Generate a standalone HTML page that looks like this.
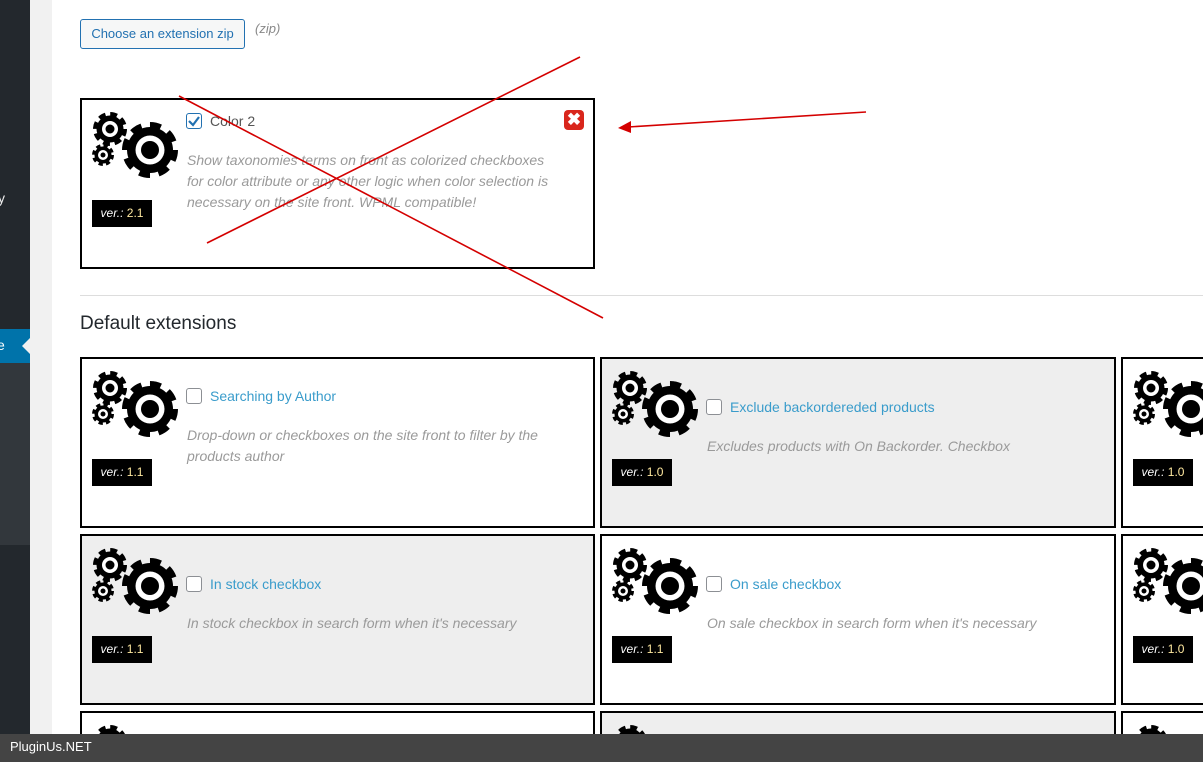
<!DOCTYPE html>
<html style="overflow:hidden;width:1203px;height:762px"><head><meta charset="utf-8"><style>
*{box-sizing:border-box;margin:0;padding:0}
body{width:1203px;height:762px;overflow:hidden;position:relative;background:#fff;font-family:"Liberation Sans",sans-serif}
.abs{position:absolute}
#wrap{position:absolute;left:0;top:0;width:1203px;height:762px;overflow:hidden}
.card{position:absolute;border:2px solid #000;background:#fff;width:516px;height:171px}
.card.g{background:#eee}
.card svg{position:absolute;left:10px;top:10px}
.t{position:absolute;left:104px;font-size:14px;color:#3a9ccb;white-space:nowrap;line-height:18px}
.t i{display:inline-block;width:16px;height:16px;border:1px solid #8c8f94;border-radius:3px;background:#fff;vertical-align:-3px;margin-right:8px}
.d{position:absolute;left:105px;width:400px;font-size:14px;font-style:italic;color:#9a9a9a;line-height:21px}
.v{position:absolute;left:10px;top:100px;width:60px;height:27px;background:#000;color:#fff;font-size:12px;line-height:27px;text-align:center}
.v em{font-style:italic}
.v b{font-weight:normal;color:#ffe9a0}
</style></head><body>
<div id="wrap">
<svg width="0" height="0" style="position:absolute;left:0;top:0">
<defs>
<g id="gear">
<circle cx="58" cy="40" r="23"/>
<circle cx="58" cy="40" r="25" fill="none" stroke="#000" stroke-width="6" stroke-dasharray="11 8.6"/>
<circle cx="58" cy="40" r="14.5" fill="#fff"/>
<circle cx="58" cy="40" r="9"/>
<circle cx="18" cy="19" r="13.5"/>
<circle cx="18" cy="19" r="15" fill="none" stroke="#000" stroke-width="4" stroke-dasharray="7 4.8"/>
<circle cx="18" cy="19" r="8" fill="#fff"/>
<circle cx="18" cy="19" r="4.5"/>
<circle cx="11" cy="45" r="8.5"/>
<circle cx="11" cy="45" r="9.5" fill="none" stroke="#000" stroke-width="3" stroke-dasharray="4.3 3.2"/>
<circle cx="11" cy="45" r="5" fill="#fff"/>
<circle cx="11" cy="45" r="2.5"/>
</g></defs></svg>
<div class="abs" style="left:0;top:0;width:30px;height:762px;background:#23282d"></div>
<div class="abs" style="left:0;top:363px;width:30px;height:182px;background:#32373c"></div>
<div class="abs" style="left:0;top:329px;width:30px;height:34px;background:#0073aa"></div>
<div class="abs" style="left:-3px;top:337px;color:#fff;font-size:14px">e</div>
<div class="abs" style="left:22px;top:338px;width:0;height:0;border-top:8px solid transparent;border-bottom:8px solid transparent;border-right:8px solid #f1f1f1"></div>
<div class="abs" style="left:-2px;top:190px;font-size:14px;color:#eee">y</div>
<div class="abs" style="left:30px;top:0;width:22px;height:762px;background:#f1f1f1"></div>

<div class="abs" style="left:80px;top:19px;width:165px;height:30px;border:1px solid #2271b1;border-radius:3px;background:#f6f7f7;color:#2271b1;font-size:13px;line-height:28px;text-align:center">Choose an extension zip</div>
<div class="abs" style="left:255px;top:21px;font-size:13px;font-style:italic;color:#888">(zip)</div>

<div class="card" style="left:80px;top:98px;width:515px">
<svg width="90" height="80"><use href="#gear"/></svg>
<div class="t" style="top:12px;color:#555"><i style="border-color:#2271b1;position:relative"><svg width="14" height="14" style="left:0;top:0"><path d="M2 7 L6 11 L12 3" fill="none" stroke="#2271b1" stroke-width="2.2"/></svg></i>Color 2</div>
<div class="d" style="top:50px">Show taxonomies terms on front as colorized checkboxes<br>for color attribute or any other logic when color selection is<br>necessary on the site front. WPML compatible!</div>
<div class="v"><em>ver.:</em> <b>2.1</b></div>
<div class="abs" style="left:482px;top:10px;width:20px;height:20px;border-radius:4px;background:#d9261c;color:#fff;font-size:17px;font-weight:bold;line-height:20px;text-align:center">✖</div>
</div>

<div class="abs" style="left:80px;top:295px;width:1123px;height:1px;background:#ddd"></div>
<div class="abs" style="left:80px;top:313px;font-size:19px;color:#23282d">Default extensions</div>

<div class="card" style="left:80px;top:357px;width:515px">
<svg width="90" height="80"><use href="#gear"/></svg>
<div class="t" style="top:28px"><i></i>Searching by Author</div>
<div class="d" style="top:66px">Drop-down or checkboxes on the site front to filter by the<br>products author</div>
<div class="v"><em>ver.:</em> <b>1.1</b></div>
</div>
<div class="card g" style="left:600px;top:357px">
<svg width="90" height="80"><use href="#gear"/></svg>
<div class="t" style="top:39px"><i></i>Exclude backordereded products</div>
<div class="d" style="top:77px;width:420px">Excludes products with On Backorder. Checkbox</div>
<div class="v"><em>ver.:</em> <b>1.0</b></div>
</div>
<div class="card" style="left:1121px;top:357px;width:82px;border-right:none">
<svg width="90" height="80"><use href="#gear"/></svg>
<div class="v"><em>ver.:</em> <b>1.0</b></div>
</div>

<div class="card g" style="left:80px;top:534px;width:515px">
<svg width="90" height="80"><use href="#gear"/></svg>
<div class="t" style="top:39px"><i></i>In stock checkbox</div>
<div class="d" style="top:77px">In stock checkbox in search form when it's necessary</div>
<div class="v"><em>ver.:</em> <b>1.1</b></div>
</div>
<div class="card" style="left:600px;top:534px">
<svg width="90" height="80"><use href="#gear"/></svg>
<div class="t" style="top:39px"><i></i>On sale checkbox</div>
<div class="d" style="top:77px">On sale checkbox in search form when it's necessary</div>
<div class="v"><em>ver.:</em> <b>1.1</b></div>
</div>
<div class="card" style="left:1121px;top:534px;width:82px;border-right:none">
<svg width="90" height="80"><use href="#gear"/></svg>
<div class="v"><em>ver.:</em> <b>1.0</b></div>
</div>

<div class="card" style="left:80px;top:711px;width:515px;height:51px;border-bottom:none"><svg width="90" height="80"><use href="#gear"/></svg></div>
<div class="card g" style="left:600px;top:711px;height:51px;border-bottom:none"><svg width="90" height="80"><use href="#gear"/></svg></div>
<div class="card" style="left:1121px;top:711px;width:82px;height:51px;border-bottom:none;border-right:none"><svg width="90" height="80"><use href="#gear"/></svg></div>

<svg class="abs" style="left:0;top:0" width="1203" height="762">
<line x1="179" y1="96" x2="603" y2="318" stroke="#d40000" stroke-width="1.6"/>
<line x1="580" y1="57" x2="207" y2="243" stroke="#d40000" stroke-width="1.6"/>
<line x1="866" y1="112" x2="628" y2="127" stroke="#d40000" stroke-width="1.6"/>
<path d="M618 128 L631 121 L631 133 Z" fill="#d40000"/>
</svg>

<div class="abs" style="left:0;top:734px;width:1203px;height:28px;background:#444;color:#fff;font-size:13px;line-height:26px;padding-left:10px">PluginUs.NET</div>
</div>
</body></html>
